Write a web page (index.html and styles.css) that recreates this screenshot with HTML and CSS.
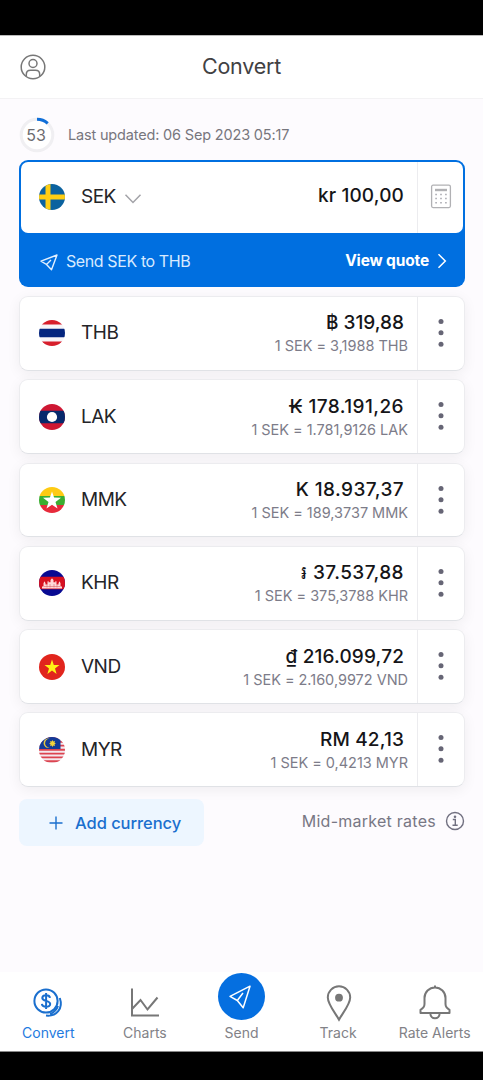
FILE: index.html
```html
<!DOCTYPE html>
<html lang="en">
<head>
<meta charset="utf-8">
<title>Convert</title>
<link rel="stylesheet" href="styles.css">
</head>
<body>
<svg class="defs" width="0" height="0">
  <defs>
    <clipPath id="round"><circle cx="13" cy="13" r="13"/></clipPath>
    <symbol id="dots" viewBox="0 0 6 30"><g fill="#666575"><circle cx="3" cy="3.5" r="2.5"/><circle cx="3" cy="14.8" r="2.5"/><circle cx="3" cy="26.2" r="2.5"/></g></symbol>
  </defs>
</svg>
<div class="status-bar"></div>
<header class="header">
  <svg class="profile" viewBox="0 0 26 26" fill="none" stroke="#777" stroke-width="1.5"><circle cx="13" cy="13" r="11.8"/><circle cx="13" cy="9.5" r="4"/><path d="M6.3 22.4V20.5Q6.3 16.3 10.5 16.3H15.5Q19.7 16.3 19.7 20.5V22.4"/></svg>
  <h1 class="title">Convert</h1>
</header>
<main class="main">
  <div class="updated">
    <div class="timer">
      <svg viewBox="0 0 36 36" fill="none" stroke-width="3"><circle cx="18" cy="18" r="15.8" fill="#fff" stroke="#f0eff2"/><path d="M18 2.2A15.8 15.8 0 0 1 28.7 6.3" stroke="#106fd8"/></svg>
      <span class="timer-value">53</span>
    </div>
    <span class="updated-text">Last updated: 06 Sep 2023 05:17</span>
  </div>

  <section class="base">
    <div class="base-row">
      <svg class="flag" viewBox="0 0 26 26"><g clip-path="url(#round)"><path fill="#0b629f" d="M0 0h26v26H0z"/><path fill="#ffce13" d="M6.5 0h5v26h-5zM0 10.5h26v5H0z"/></g></svg>
      <span class="code">SEK</span>
      <svg class="chevron" viewBox="0 0 18 12"><path d="m1.5 1.8 7.5 7.7 7.5-7.7" fill="none" stroke="#a3a3a8" stroke-width="1.5"/></svg>
      <div class="values"><span class="amount">kr 100,00</span></div>
      <div class="action">
        <svg class="calculator" viewBox="0 0 22 25"><rect x="1.6" y="1.2" width="18.8" height="22.4" rx="1.5" fill="none" stroke="#b1b1b4" stroke-width="1.3"/><path d="M5 6h12" stroke="#b1b1b4" stroke-width="2.4"/><path d="M5.2 10.5h12M5.2 14.5h12M5.2 18.8h12" stroke="#b4b4ba" stroke-width="1.6" stroke-dasharray="1.8 3.1"/></svg>
      </div>
    </div>
    <div class="quote">
      <svg class="quote-plane" viewBox="0 0 18 17"><path d="M1 7.2 17 1 11.500 15.800 6.500 10.500ZM6.500 10.500 11 6" fill="none" stroke="#e2f0ff" stroke-width="1.400" stroke-linejoin="round"/></svg>
      <span class="quote-text">Send SEK to THB</span>
      <span class="quote-link">View quote</span>
      <svg class="quote-arrow" viewBox="0 0 10 16"><path d="m1.5 1.3 6.8 6.7-6.8 6.7" fill="none" stroke="#fff" stroke-width="1.5"/></svg>
    </div>
  </section>

  <section class="list">
    <article class="card">
      <svg class="flag" viewBox="0 0 26 26"><g clip-path="url(#round)"><path fill="#f7f5f8" d="M0 0h26v26H0z"/><path fill="#d71f2c" d="M0 0h26v4.5H0zM0 21.5h26V26H0z"/><path fill="#04257f" d="M0 8.7h26v8.6H0z"/></g></svg>
      <span class="code">THB</span>
      <div class="values"><span class="amount tight">฿ 319,88</span><span class="rate">1 SEK = 3,1988 THB</span></div>
      <div class="action"><svg class="dots"><use href="#dots"/></svg></div>
    </article>
    <article class="card">
      <svg class="flag" viewBox="0 0 26 26"><g clip-path="url(#round)"><path fill="#ce1733" d="M0 0h26v26H0z"/><path fill="#07296c" d="M0 6.7h26v12.6H0z"/><circle cx="13" cy="13" r="5.1" fill="#fff"/></g></svg>
      <span class="code">LAK</span>
      <div class="values"><span class="amount wide">₭ 178.191,26</span><span class="rate">1 SEK = 1.781,9126 LAK</span></div>
      <div class="action"><svg class="dots"><use href="#dots"/></svg></div>
    </article>
    <article class="card">
      <svg class="flag" viewBox="0 0 26 26"><g clip-path="url(#round)"><path fill="#fecb13" d="M0 0h26v9H0z"/><path fill="#3bae31" d="M0 9h26v9H0z"/><path fill="#e72a3b" d="M0 18h26v8H0z"/><path fill="#fff" d="m13 4.500 2.100 6 6.900.2-5.500 4.200 2 6.700-5.500-3.900-5.500 3.900 2-6.700L4 10.700l6.900-.2z"/></g></svg>
      <span class="code">MMK</span>
      <div class="values"><span class="amount wide">K 18.937,37</span><span class="rate">1 SEK = 189,3737 MMK</span></div>
      <div class="action"><svg class="dots"><use href="#dots"/></svg></div>
    </article>
    <article class="card">
      <svg class="flag" viewBox="0 0 26 26"><g clip-path="url(#round)"><path fill="#080a92" d="M0 0h26v26H0z"/><path fill="#d7101f" d="M0 6.700h26v12.600H0z"/><path fill="#ffd9d9" d="M3 18.500v-2h1.500v-3.300l1-1.900 1 1.900v1.300h2v-3l1-.7v1.500h2V10l1.500-1.700L14.500 10v2.300h2v-1.500l1 .7v3h2v-1.300l1-1.900 1 1.900v3.300H23v2z"/><path d="M5 16.500h16M8 14.500v3M11 14v3.500M15 14v3.500M18 14.500v3" stroke="#d7686c" stroke-width=".6"/></g></svg>
      <span class="code">KHR</span>
      <div class="values"><span class="amount wide"><span class="riel">៛</span> 37.537,88</span><span class="rate">1 SEK = 375,3788 KHR</span></div>
      <div class="action"><svg class="dots"><use href="#dots"/></svg></div>
    </article>
    <article class="card">
      <svg class="flag" viewBox="0 0 26 26"><g clip-path="url(#round)"><path fill="#e1251d" d="M0 0h26v26H0z"/><path fill="#fff315" d="m13 5.500 1.800 5.400 5.700.1-4.500 3.400 1.600 5.500-4.600-3.300-4.600 3.300L10 14.400 5.500 11l5.700-.1z"/></g></svg>
      <span class="code">VND</span>
      <div class="values"><span class="amount">₫ 216.099,72</span><span class="rate">1 SEK = 2.160,9972 VND</span></div>
      <div class="action"><svg class="dots"><use href="#dots"/></svg></div>
    </article>
    <article class="card">
      <svg class="flag" viewBox="0 0 26 26"><g clip-path="url(#round)"><path fill="#f4e9ee" d="M0 0h26v26H0z"/><path d="M0 1h26M0 4.800h26M0 8.600h26M0 12.800h26M0 16.600h26M0 20.400h26M0 24.200h26" stroke="#dc4450" stroke-width="1.900"/><path fill="#133a98" d="M0 0h21.500v12H0z"/><path fill="#e9c83d" d="M10.500 1.800a4.600 4.600 0 1 0 0 8.800 3.800 3.800 0 1 1 0-8.800z"/><path fill="#f4d13a" d="m13.500 3 .8 1.500 1.700-.4-.5 1.700 1.400.7-1.400.8.5 1.700-1.700-.5-.8 1.500-.8-1.500-1.600.5.400-1.700-1.400-.8 1.400-.7-.400-1.700 1.600.4z"/></g></svg>
      <span class="code">MYR</span>
      <div class="values"><span class="amount">RM 42,13</span><span class="rate">1 SEK = 0,4213 MYR</span></div>
      <div class="action"><svg class="dots"><use href="#dots"/></svg></div>
    </article>
  </section>

  <div class="footer-row">
    <div class="add"><svg class="plus" viewBox="0 0 14 14"><path d="M7 .5v13M.5 7h13" stroke="#1a6fce" stroke-width="1.4"/></svg><span>Add currency</span></div>
    <div class="rates-info"><span>Mid-market rates</span><svg class="info" viewBox="0 0 20 20" fill="none" stroke="#717080" stroke-width="1.400"><circle cx="10" cy="10" r="8.500"/><path d="M7.800 8.500h2.500v5.600M7.500 14.300h5.200"/><circle cx="10" cy="5.700" r=".6" fill="#717080"/></svg></div>
  </div>
</main>
<nav class="nav">
  <div class="nav-item active">
    <div class="nav-icon"><svg width="32" height="32" viewBox="0 0 32 32" fill="none" stroke="#1a6fce" stroke-width="2"><circle cx="14" cy="14" r="11.600"/><path d="M27.800 11C31.500 21.500 24.500 29.800 14 28.600M26 19C24.500 23.300 22 25.500 18 27"/><path d="M18 10.800C17.500 7.300 10.300 7.300 10.300 11 10.300 14.800 18.200 13 18.200 17 18.200 20.600 10.300 20.600 9.900 16.800M14.100 6v16"/></svg></div>
    <span>Convert</span>
  </div>
  <div class="nav-item">
    <div class="nav-icon"><svg width="32" height="32" viewBox="0 0 32 32" fill="none" stroke="#777" stroke-width="2"><path d="M3 1.500v27h27M3 22l8.500-9 7 9.500L28.500 10.500"/></svg></div>
    <span>Charts</span>
  </div>
  <div class="nav-item">
    <div class="send-button"><svg class="send-plane" viewBox="0 0 22 24" fill="none" stroke="#fff" stroke-width="1.500" stroke-linejoin="round"><path d="M1 11.300 21 1.200 14.200 22.800 8.300 15.500ZM8.300 15.500 14 8"/></svg></div>
    <span>Send</span>
  </div>
  <div class="nav-item">
    <div class="nav-icon"><svg class="pin" width="30" height="38" viewBox="0 0 30 38" fill="none" stroke="#777" stroke-width="2"><path d="M15 35.700C12 30 3.800 20.500 3.800 13.500A11.200 11.200 0 0 1 26.200 13.500C26.200 20.500 18 30 15 35.700Z"/><circle cx="15" cy="13.700" r="3.900" fill="#777" stroke="none"/></svg></div>
    <span>Track</span>
  </div>
  <div class="nav-item">
    <div class="nav-icon"><svg width="34" height="38" viewBox="0 0 34 38" fill="none" stroke="#777" stroke-width="2" stroke-linejoin="round"><path d="M17 1.500v3M2.500 29v-3.200Q6.500 23.500 6.500 20V14A10.500 10.500 0 0 1 27.500 14V20Q27.500 23.500 31.500 25.800V29ZM12.300 29C12.300 36 21.700 36 21.700 29"/></svg></div>
    <span>Rate Alerts</span>
  </div>
</nav>
<div class="system-bar"></div>
</body>
</html>
```
FILE: styles.css
```css
* { box-sizing: border-box; }
body {
  margin: 0;
  height: 1080px;
  display: flex;
  flex-direction: column;
  background: #fdfbfe;
  font-family: Inter, "Noto Sans", sans-serif;
  overflow: hidden;
  white-space: nowrap;
}
svg { display: block; flex: none; }
.defs { position: absolute; }
.status-bar { height: 35px; background: #000; flex: none; }
.header {
  height: 64px;
  flex: none;
  display: grid;
  grid-template-columns: 60px 1fr 60px;
  align-items: center;
  background: #fff;
  border-top: 1px solid #bbb;
  border-bottom: 1px solid #f3f2f4;
}
.profile { width: 26px; height: 26px; margin-left: 20px; }
.title { margin: 0; text-align: center; font-size: 21.500px; letter-spacing: -.2px; font-weight: 400; color: #414143; line-height: 26px; padding-bottom: 2px; }
.main { flex: 1; padding: 18px 18px 0 19px; min-height: 0; }
.updated { height: 43px; display: flex; gap: 13px; }
.timer { display: grid; width: 36px; height: 36px; place-items: center; }
.timer > * { grid-area: 1 / 1; }
.timer svg { width: 36px; height: 36px; }
.timer-value { font-size: 16px; color: #6c6b70; padding-right: 2px; }
.updated-text { font-size: 14.500px; letter-spacing: -.17px; color: #77767d; line-height: 35px; }

.base { height: 127px; background: #006fe0; border-radius: 9px; padding: 2px 2px 0; }
.base-row { height: 71px; background: #fff; border-radius: 7px; display: flex; align-items: center; padding: 0 0 2px 18px; }
.flag { width: 26px; height: 26px; }
.code { font-size: 19px; letter-spacing: -.5px; color: #242428; margin-left: 16px; line-height: 24px; }
.chevron { width: 18px; height: 12px; margin-left: 8px; margin-top: 4px; }
.values { flex: 1; display: flex; flex-direction: column; align-items: flex-end; padding-right: 9px; }
.amount { font-size: 19px; font-weight: 500; letter-spacing: .15px; color: #151518; line-height: 24px; padding-right: 4px; }
.amount.wide { letter-spacing: .42px; }
.amount.tight { letter-spacing: 0; }
.base .amount { padding-bottom: 2px; }
.rate { font-size: 14.500px; letter-spacing: -.02px; color: #7d7c89; line-height: 22px; }
.card .values { padding-top: 2px; }
.riel { font-size: 19px; line-height: 1; }
.action { width: 47px; align-self: stretch; border-left: 1px solid #ececef; display: flex; align-items: center; justify-content: center; }
.base .action { width: 46px; margin-bottom: -2px; padding-bottom: 2px; }
.calculator { width: 22px; height: 25px; }
.quote { height: 54px; display: flex; align-items: center; color: #fff; padding: 1px 16px 0 19px; }
.quote-plane { width: 18px; height: 17px; margin-top: 3px; }
.quote-text { font-size: 16px; letter-spacing: -.4px; margin-left: 8px; color: #d8eaff; padding-top: 1px; }
.quote-link { font-size: 15.500px; letter-spacing: -.15px; font-weight: 700; margin-left: auto; }
.quote-arrow { width: 10px; height: 16px; margin-left: 8px; }

.list { margin-top: 9px; display: flex; flex-direction: column; gap: 8.400px; }
.card {
  height: 74.900px;
  background: #fff;
  border: 1px solid #ececef;
  border-bottom-color: #e0e2e6;
  border-radius: 9px;
  box-shadow: 0 3px 14px rgba(0, 0, 0, .06);
  display: flex;
  align-items: center;
  padding-left: 19px;
}
.dots { width: 6px; height: 30px; margin: 0 1px 1px 0; }

.footer-row { margin-top: 12px; display: flex; justify-content: space-between; }
.add { width: 185px; height: 47px; border-radius: 8px; background: #edf6ff; color: #1a6fce; font-size: 16.500px; letter-spacing: -.06px; font-weight: 500; display: flex; align-items: center; padding-left: 30px; gap: 12px; }
.plus { width: 14px; height: 14px; }
.rates-info { height: 43px; display: flex; align-items: center; gap: 9px; color: #787784; font-size: 16px; letter-spacing: .26px; }
.info { width: 20px; height: 20px; }

.nav { height: 80px; flex: none; display: grid; grid-template-columns: repeat(5, 1fr); background: #fff; border-bottom: 1px solid #888; font-size: 14px; color: #828287; }
.nav-item { display: flex; flex-direction: column; align-items: center; line-height: 22px; }
.nav-icon { height: 50px; display: flex; align-items: center; justify-content: center; padding-top: 12px; }
.active { color: #1f7be0; }
.pin { margin-left: 1px; }
.send-button { width: 47px; height: 47px; margin: 1px 0 2px 1px; border-radius: 50%; background: #056fe0; display: flex; align-items: center; justify-content: center; }
.send-plane { width: 22px; height: 24px; margin-right: 3px; }
.system-bar { height: 28px; background: #000; flex: none; }
```
